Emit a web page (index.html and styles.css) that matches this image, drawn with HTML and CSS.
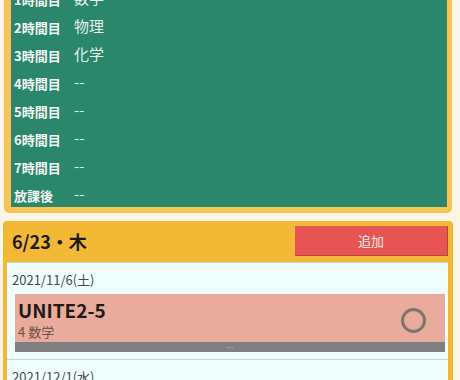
FILE: index.html
```html
<!DOCTYPE html>
<html lang="ja">
<head>
    <meta charset="UTF-8">
    <meta name="viewport" content="width=device-width, initial-scale=1.0">
    <title>時間割</title>
    <link rel="stylesheet" href="styles.css">
</head>
<body>
    <div class="page">
        <div class="timetable">
            <div class="board">
                <div class="row"><b class="label">1時間目</b><span class="value">数学</span></div>
                <div class="row"><b class="label">2時間目</b><span class="value">物理</span></div>
                <div class="row"><b class="label">3時間目</b><span class="value">化学</span></div>
                <div class="row"><b class="label">4時間目</b><span class="value">--</span></div>
                <div class="row"><b class="label">5時間目</b><span class="value">--</span></div>
                <div class="row"><b class="label">6時間目</b><span class="value">--</span></div>
                <div class="row"><b class="label">7時間目</b><span class="value">--</span></div>
                <div class="row"><b class="label">放課後</b><span class="value">--</span></div>
            </div>
        </div>

        <div class="day">
            <div class="day-head">
                <b class="day-title">6/23・木</b>
                <button type="button" class="btn-add">追加</button>
            </div>
            <div class="day-body">
                <div class="item">
                    <div class="item-date">2021/11/6(土)</div>
                    <div class="task">
                        <div class="task-main">
                            <div class="task-text">
                                <div class="task-name">UNITE2-5</div>
                                <div class="task-sub">4 数学</div>
                            </div>
                            <span class="check"></span>
                        </div>
                        <div class="task-bar">…</div>
                    </div>
                </div>
                <div class="item">
                    <div class="item-date">2021/12/1(水)</div>
                </div>
            </div>
        </div>
    </div>
</body>
</html>
```

FILE: styles.css
```css
body {
    margin: 0;
    background-color: #fcf6e6;
    font-family: "Noto Sans CJK JP", "Noto Sans", sans-serif;
    overflow: hidden;
}

/* ページは少しスクロールした状態 */
div.page {
    margin-top: -30px;
}

div.timetable {
    width: 436px;
    margin-left: 4px;
    padding: 6px 5px 6px 7px;
    background-color: #fac358;
    border-radius: 5px;
}

div.timetable div.board {
    background-color: #2b876b;
    padding: 7px 3px 0 3px;
}

div.board div.row {
    display: flex;
    height: 28px;
}

div.board div.row b.label {
    width: 60px;
    padding-top: 6px;
    line-height: 22px;
    font-size: 13px;
    color: #f3f6f3;
}

div.board div.row span.value {
    padding-top: 4px;
    line-height: 22px;
    font-size: 15px;
    color: #e6efe9;
}

div.day {
    width: 441px;
    margin-top: 8px;
    margin-left: 3px;
    padding: 5px 5px 0 4px;
    background-color: #f3b836;
    border-radius: 4px 4px 0 0;
}

div.day div.day-head {
    display: flex;
    justify-content: space-between;
    align-items: center;
    height: 30px;
    padding-left: 5px;
    margin-bottom: 6px;
}

div.day-head b.day-title {
    font-size: 18px;
    color: #1c1c1c;
}

div.day-head button.btn-add {
    width: 153px;
    height: 30px;
    border: none;
    border-right: 1px solid #b9433d;
    border-bottom: 1px solid #b9433d;
    background-color: #e65454;
    color: #fbecea;
    font-size: 13px;
    font-family: "Noto Sans CJK JP", sans-serif;
}

div.day div.day-body {
    background-color: #effdfd;
    border-top: 1px solid #cfd6cf;
}

div.day-body div.item {
    padding: 0 3px 7px 8px;
    border-bottom: 1px solid #c6d6d6;
}

div.item div.item-date {
    margin-left: -3px;
    padding: 8px 0 5px 0;
    line-height: 18px;
    font-size: 13px;
    color: #4a4a4a;
}

div.item div.task {
    background-color: #e9ab9b;
}

div.task div.task-main {
    display: flex;
    justify-content: space-between;
    align-items: center;
    height: 48px;
    padding: 0 19px 0 3px;
}

div.task div.task-text {
    align-self: flex-start;
    padding-top: 4px;
}

div.task div.task-name {
    font-size: 19px;
    font-weight: bold;
    line-height: 24px;
    color: #1e1a18;
}

div.task div.task-sub {
    margin-top: 1px;
    font-size: 13px;
    line-height: 18px;
    color: #6e5148;
}

div.task span.check {
    width: 19px;
    height: 19px;
    margin-top: 4px;
    border: 3px solid #7a756d;
    border-radius: 50%;
}

div.task div.task-bar {
    height: 10px;
    background-color: #808080;
    text-align: center;
    font-size: 7px;
    line-height: 10px;
    color: #c9c9c9;
    overflow: hidden;
}
```
